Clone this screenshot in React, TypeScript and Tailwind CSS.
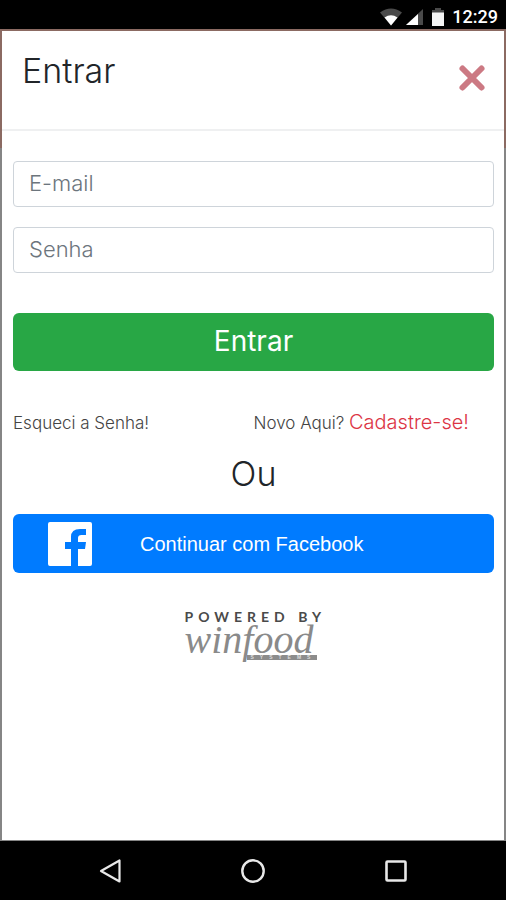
import React from "react";

const StatusBar = () => {
  return (
    <div className="h-[29px] bg-black flex items-center justify-end pr-2 pt-1 text-white">
      <svg className="w-[22px] h-[18px]" viewBox="0 0 22 18">
        <path d="M0 4.500Q11-3.500 22 4.500L11 17.500Z" fill="#4a4a4a" />
        <path d="M4.500 9.500Q11 5 17.500 9.500L11 17.500Z" fill="#fff" />
      </svg>
      <svg className="w-[18px] h-[18px] ml-1" viewBox="0 0 18 18">
        <path d="M17 1V17H0Z" fill="#4a4a4a" />
        <path d="M12 6V17H0Z" fill="#fff" />
      </svg>
      <svg className="w-3 h-[18px] ml-2" viewBox="0 0 12 18">
        <path d="M3 0H9V2H12V5H0V2H3Z" fill="#4a4a4a" />
        <path d="M0 4.500H12V18H0Z" fill="#f5f5f5" />
      </svg>
      <span className="ml-2 text-lg leading-none font-medium font-['Roboto',sans-serif]">
        12:29
      </span>
    </div>
  );
};

const NavBar = () => {
  return (
    <div className="h-[59px] bg-black grid grid-cols-[1fr_auto_1fr] items-center">
      <button aria-label="Voltar" className="justify-self-end mr-[119px]">
        <svg className="w-6 h-6" viewBox="0 0 24 24" fill="none">
          <path
            d="M21.500 1.500V22.500L3 12Z"
            stroke="#e8e8e8"
            strokeWidth="2.2"
            strokeLinejoin="round"
          />
        </svg>
      </button>
      <button aria-label="Início">
        <svg className="w-6 h-6" viewBox="0 0 24 24" fill="none">
          <circle cx="12" cy="12" r="10.700" stroke="#e8e8e8" strokeWidth="2.4" />
        </svg>
      </button>
      <button aria-label="Recentes" className="justify-self-start ml-[119px]">
        <svg className="w-6 h-6" viewBox="0 0 24 24" fill="none">
          <rect x="2.500" y="2.500" width="19" height="19" rx="1" stroke="#e8e8e8" strokeWidth="2.6" />
        </svg>
      </button>
    </div>
  );
};

const Powered = () => {
  return (
    <div className="mt-9 flex flex-col items-center">
      <div className="w-[138px]">
        <p className="text-sm leading-4 tracking-[5px] whitespace-nowrap text-[#4a4a4a] font-['Lato',sans-serif] font-bold">
          POWERED BY
        </p>
        <div className="w-[132px]">
          <p className="text-[40px] leading-[30px] italic text-[#8a8a8a] font-['Liberation_Serif',serif]">
            winfood
          </p>
          <p className="ml-auto w-[70px] h-[5px] pl-1 bg-[#8c8c8c] text-[#ddd] text-[5px] leading-[5px] tracking-[6px] whitespace-nowrap font-bold font-['Liberation_Sans',sans-serif]">
            SYSTEMS
          </p>
        </div>
      </div>
    </div>
  );
};

const App = () => {
  return (
    <div className="min-h-screen flex flex-col bg-black font-['Inter',sans-serif] font-light">
      <StatusBar />
      <div className="flex-1 flex flex-col p-0.5 pb-px bg-[linear-gradient(#8b6a62_119px,#858585_119px)]">
        <div className="flex-1 bg-white">
          <header className="h-[100px] flex justify-between pl-5 pr-[18px] pt-5 border-b-2 border-[#eff0f1]">
            <h1 className="text-[34px] leading-10 text-[#212529]">Entrar</h1>
            <button aria-label="Fechar" className="w-7 h-7 mt-[13px]">
              <svg className="w-full h-full" viewBox="0 0 28 28">
                <path
                  d="M4.500 4.500L23.500 23.500M23.500 4.500L4.500 23.500"
                  stroke="#cc7983"
                  strokeWidth="6"
                  strokeLinecap="round"
                />
              </svg>
            </button>
          </header>
          <main className="pl-[11px] pr-2.5 pt-[30px]">
            <form>
              <input
                type="email"
                aria-label="E-mail"
                placeholder="E-mail"
                className="block w-full h-[46px] px-[15px] pb-0.5 text-[22px] border border-[#ced4da] rounded placeholder:text-[#6c757d]"
              />
              <input
                type="password"
                aria-label="Senha"
                placeholder="Senha"
                className="block w-full h-[46px] mt-5 px-[15px] pb-0.5 text-[22px] border border-[#ced4da] rounded placeholder:text-[#6c757d]"
              />
              <button
                type="button"
                className="w-full h-[58px] mt-10 pb-0.5 rounded-md bg-[#28a745] text-white text-[28px] font-normal"
              >
                Entrar
              </button>
            </form>
            <div className="mt-9 grid grid-cols-2 items-start text-[#444]">
              <a href="#senha" className="text-[17px] leading-8">
                Esqueci a Senha!
              </a>
              <p className="text-[17px] leading-8 whitespace-nowrap">
                Novo Aqui?{" "}
                <a href="#cadastro" className="text-xl text-[#dc3545]">
                  Cadastre-se!
                </a>
              </p>
            </div>
            <h2 className="mt-[15px] text-center text-[34px] leading-10 text-[#212529]">Ou</h2>
            <button
              type="button"
              className="w-full h-[59px] mt-5 pl-[35px] flex items-center rounded-md bg-[#007bff] text-white text-xl font-normal font-['Liberation_Sans',sans-serif]"
            >
              <svg className="w-11 h-11" viewBox="0 0 44 44">
                <path
                  d="M2 0H42Q44 0 44 2V42Q44 44 42 44H30V27H37L38 20H30V16Q30 13 33.500 13H38V7H32Q23 7 23 15V20H17V27H23V44H2Q0 44 0 42V2Q0 0 2 0Z"
                  fill="#fff"
                />
              </svg>
              <span className="ml-12">Continuar com Facebook</span>
            </button>
            <Powered />
          </main>
        </div>
      </div>
      <NavBar />
    </div>
  );
};

export default App;
